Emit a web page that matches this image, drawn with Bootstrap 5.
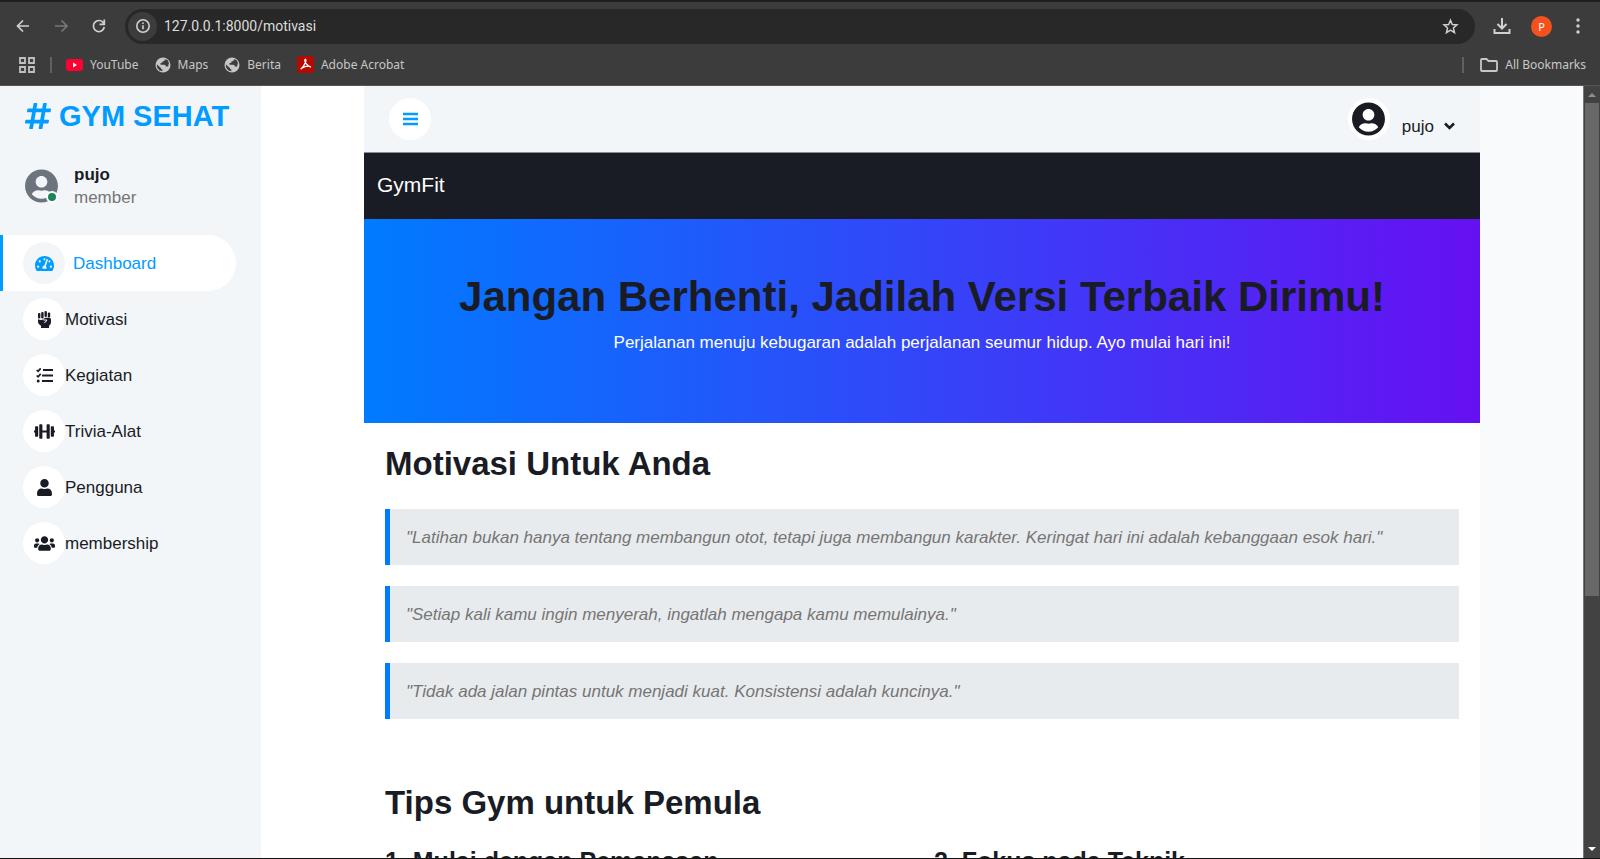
<!DOCTYPE html>
<html lang="id">
<head>
<meta charset="utf-8">
<meta name="viewport" content="width=device-width, initial-scale=1">
<title>GymFit - Motivasi</title>
<link href="https://cdn.jsdelivr.net/npm/bootstrap@5.3.0/dist/css/bootstrap.min.css" rel="stylesheet">
<style>
:root{--ink:#191c24;--sky:#009cff;--mist:#f3f6f9;--chrome:#3c3c3c}
body{font-family:"Liberation Sans",Arial,sans-serif;font-size:17px;line-height:25px;color:#757575;background:#fff}
a{text-decoration:none}
svg{display:block;flex:none}
h1,h2,h3{color:var(--ink);font-weight:700;line-height:1.2}
.browser-ui{background:var(--chrome);border-top:2px solid #1f1f1f;border-bottom:1px solid #555;height:86px;font-family:"Noto Sans",sans-serif;color:#c7c7c7}
.browser-ui button,.topbar button{background:none;border:0;padding:0;color:inherit}
.tool-row{height:48px;padding:0 16px 0 14px}
.nav-arrows{gap:15px}
.omnibox{background:#282828;height:35px;border-radius:18px;margin-left:15px;padding:0 16px 0 3px}
.omnibox input{background:none;border:0;outline:0;color:#dcdcdc;font-size:14px;font-family:Roboto,sans-serif;margin-left:5px}
.site-info{width:29px;height:29px;border-radius:50%;background:var(--chrome)!important}
.avatar-p{width:21px;height:21px;border-radius:50%;background:#f4511e!important;color:#fff!important;font-size:11px}
.tool-end{margin-left:14px}
.mark-row{height:30px;padding:0 14px 1px 19px;font-size:12px}
.mark-row a{color:#c7c7c7;gap:7px}
.divider{width:2px;height:16px;background:#606060}
.divider.first{margin:0 14px 0 15px}
.viewport{height:calc(100vh - 86px);border-bottom:1px solid #111}
.side{width:261px;background:var(--mist)}
.brand{font-size:29px;font-weight:700;color:var(--sky);gap:8px;height:60px;padding-left:25px}
.person{padding:17px 0 0 25px;gap:16px;line-height:23px}
.person strong{color:var(--ink)}
.online{right:0;bottom:0;width:12px;height:12px;border:2px solid #fff;background:#198754;border-radius:50%}
.menu{margin-top:26px}
.menu a{height:56px;width:236px;color:var(--ink);padding-left:20px;border-left:3px solid transparent;border-radius:0 28px 28px 0}
.menu a.active{background:#fff;color:var(--sky);border-color:var(--sky);gap:8px}
.disc{width:42px;height:42px;border-radius:50%;background:#fff}
.menu a.active .disc{background:var(--mist)}
.page-col{margin:0 103px}
.topbar{height:67px;background:var(--mist);padding:0 23px 0 25px;border-bottom:1px solid #8b8f95;color:var(--ink)}
.topbar .disc{background:#fff;color:var(--sky)}
.account{padding-top:14px}
.gymbar{background:var(--ink);height:66px;padding:0 13px 3px}
.gymbar a{color:#fff;font-size:21px}
.hero{background:linear-gradient(to right,#007bff,#6610f2);color:#fff;padding:53px 20px 68px}
.hero h1{font-size:42px}
.inner{padding:21px}
.inner h2{font-size:33px;line-height:40px;margin-bottom:25px}
.inner h3{font-size:25px}
.quote{background:#e8ebee;border-left:5px solid #007bff;padding:16px 16px 15px;margin-bottom:21px;font-style:italic}
.tips{padding-top:43px}
.tips h2{margin-bottom:23px}
.gutter-right{background:#f8fafc;width:103px;margin-left:-103px}
.scroller{width:17px;background:#424242;border-left:1px solid #777}
.thumb{height:493px;width:14px;background:#686868}
</style>
</head>
<body class="overflow-hidden">
<header class="browser-ui">
  <div class="tool-row d-flex align-items-center">
    <div class="nav-arrows d-flex">
      <button aria-label="Back"><svg width="22" height="22" viewBox="0 0 22 22" fill="none" stroke="#d0d0d0" stroke-width="1.700"><path d="M15 11H4M9 5.500L3.500 11 9 16.500"/></svg></button>
      <button aria-label="Forward"><svg width="22" height="22" viewBox="0 0 22 22" fill="none" stroke="#777" stroke-width="1.700"><path d="M4 11h12M10.500 5.500L16 11l-5.500 5.500"/></svg></button>
      <button aria-label="Reload"><svg width="22" height="22" viewBox="0 0 22 22" fill="none" stroke="#d0d0d0" stroke-width="1.700"><path d="M15.500 8a5.500 5.500 0 1 0 .8 4M16.300 4.500v4.800h-4.800"/></svg></button>
    </div>
    <div class="omnibox d-flex align-items-center flex-grow-1">
      <button class="site-info d-flex align-items-center justify-content-center" aria-label="Site information"><svg width="16" height="16" viewBox="0 0 16 16" fill="none" stroke="#d0d0d0" stroke-width="1.600"><circle cx="8" cy="8" r="6.200"/><path d="M8 7.200v4M8 4.500v1.600"/></svg></button>
      <input class="flex-grow-1" type="text" aria-label="Address" value="127.0.0.1:8000/motivasi">
      <button aria-label="Bookmark"><svg width="17" height="17" viewBox="0 0 17 17" fill="none" stroke="#d0d0d0" stroke-width="1.500"><path d="M8.500 2.200l1.800 4.300 4.700.4-3.600 3.100 1.100 4.600-4-2.500-4 2.500 1.100-4.600L2 6.900l4.700-.4z"/></svg></button>
    </div>
    <div class="tool-end d-flex align-items-center gap-3">
      <button class="ms-1" aria-label="Downloads"><svg width="18" height="18" viewBox="0 0 18 18" fill="none" stroke="#d0d0d0" stroke-width="2"><path d="M9 1v10M4.500 7L9 11.500 13.500 7M1.500 12v4h15v-4"/></svg></button>
      <button class="avatar-p ms-1 d-flex align-items-center justify-content-center" aria-label="Profile">P</button>
      <button class="ms-1" aria-label="Menu"><svg width="12" height="18" viewBox="0 0 12 18" fill="#d0d0d0"><circle cx="6" cy="3" r="1.700"/><circle cx="6" cy="9" r="1.700"/><circle cx="6" cy="15" r="1.700"/></svg></button>
    </div>
  </div>
  <nav class="mark-row d-flex align-items-center">
    <button aria-label="Tab groups"><svg width="16" height="16" viewBox="0 0 16 16" fill="none" stroke="#c0c0c0" stroke-width="1.800"><path d="M1 1h5v5H1zM10 1h5v5h-5zM1 10h5v5H1zM10 10h5v5h-5z"/></svg></button>
    <span class="divider first"></span>
    <a href="#" class="d-flex align-items-center me-3"><svg width="17" height="12" viewBox="0 0 17 12"><rect width="17" height="12" rx="3" fill="#f03"/><path d="M7 3.500v5l4-2.500z" fill="#fff"/></svg>YouTube</a>
    <a href="#" class="d-flex align-items-center me-3"><svg width="16" height="16" viewBox="0 0 16 16"><circle cx="8" cy="8" r="7.500" fill="#c4c7c9"/><path d="M9.800 2.200c.2 1.700-.8 2-2.100 2.100-.2 1.500-1 1.700-2.200 1.800v1.600h3.700c1.300 0 1.500.8 1.500 1.800h2.500l.3-2 .5-1.500-1.500-3zM1.700 7.300l4.200 3.700c0 1 .6 1.200 1.400 1.300v1.900l-2.800-.8-2.300-2.700z" fill="#3c3c3c"/></svg>Maps</a>
    <a href="#" class="d-flex align-items-center me-3"><svg width="16" height="16" viewBox="0 0 16 16"><circle cx="8" cy="8" r="7.500" fill="#c4c7c9"/><path d="M9.800 2.200c.2 1.700-.8 2-2.100 2.100-.2 1.500-1 1.700-2.200 1.800v1.600h3.700c1.300 0 1.500.8 1.500 1.800h2.500l.3-2 .5-1.500-1.500-3zM1.700 7.300l4.200 3.700c0 1 .6 1.200 1.400 1.300v1.900l-2.800-.8-2.300-2.700z" fill="#3c3c3c"/></svg>Berita</a>
    <a href="#" class="d-flex align-items-center"><svg width="17" height="17" viewBox="0 0 16 16"><rect width="16" height="16" rx="3" fill="#b30b00"/><path d="M7.500 3c2 0 .5 5-4 9.500M7.500 3c-1 2 1.500 6 5.500 7.500-2-1.500-6-.5-8.500 1" fill="none" stroke="#fff" stroke-width="1.200"/></svg>Adobe Acrobat</a>
    <span class="divider ms-auto me-3"></span>
    <a href="#" class="d-flex align-items-center"><svg width="18" height="14" viewBox="0 0 18 14" fill="none" stroke="#c7c7c7" stroke-width="1.800"><path d="M1 2q0-1 1-1h4.500l2 2H16q1 0 1 1v8q0 1-1 1H2q-1 0-1-1z"/></svg>All Bookmarks</a>
  </nav>
</header>

<div class="viewport d-flex overflow-hidden">
  <aside class="side flex-shrink-0">
    <a href="#" class="brand d-flex align-items-center"><svg width="26" height="30" viewBox="0 0 448 512" fill="currentColor"><path d="M440.667 182.109l7.143-40c1.313-7.355-4.342-14.109-11.813-14.109h-74.810l14.623-81.891C377.123 38.754 371.468 32 363.997 32h-40.632a12 12 0 0 0-11.813 9.891L296.175 128H197.540l14.623-81.891C213.477 38.754 207.822 32 200.350 32h-40.632a12 12 0 0 0-11.813 9.891L132.528 128H53.432a12 12 0 0 0-11.813 9.891l-7.143 40C33.163 185.246 38.818 192 46.289 192h74.810L98.242 320H19.146a12 12 0 0 0-11.813 9.891l-7.143 40C-1.123 377.246 4.532 384 12.003 384h74.810L72.190 465.891C70.877 473.246 76.532 480 84.003 480h40.632a12 12 0 0 0 11.813-9.891L151.826 384h98.634l-14.623 81.891C234.523 473.246 240.178 480 247.650 480h40.632a12 12 0 0 0 11.813-9.891L315.472 384h79.096a12 12 0 0 0 11.813-9.891l7.143-40c1.313-7.355-4.342-14.109-11.813-14.109h-74.810l22.857-128h79.096a12 12 0 0 0 11.813-9.891zM261.889 320h-98.634l22.857-128h98.634l-22.857 128z"/></svg>GYM SEHAT</a>
    <div class="person d-flex align-items-center">
      <div class="position-relative">
        <svg width="33" height="34" viewBox="0 0 496 512" fill="#6c757d"><path d="M248 8C111 8 0 119 0 256s111 248 248 248 248-111 248-248S385 8 248 8zm0 96c48.600 0 88 39.400 88 88s-39.400 88-88 88-88-39.400-88-88 39.400-88 88-88zm0 344c-58.700 0-111.300-26.600-146.500-68.200 18.800-35.400 55.600-59.800 98.500-59.800 2.400 0 4.800.4 7.100 1.100 13 4.200 26.600 6.900 40.900 6.900 14.300 0 28-2.700 40.900-6.900 2.300-.7 4.700-1.100 7.100-1.100 42.900 0 79.700 24.400 98.500 59.800C359.300 421.400 306.700 448 248 448z"/></svg>
        <span class="online position-absolute"></span>
      </div>
      <div><strong class="d-block">pujo</strong><span>member</span></div>
    </div>
    <nav class="menu">
      <a href="#" class="active d-flex align-items-center"><span class="disc d-flex align-items-center justify-content-center"><svg width="19" height="17" viewBox="0 0 576 512" fill="currentColor"><path d="M288 32C128.940 32 0 160.940 0 320c0 52.800 14.250 102.260 39.060 144.800 5.610 9.620 16.300 15.200 27.440 15.200h443c11.140 0 21.830-5.580 27.440-15.200C561.750 422.260 576 372.800 576 320c0-159.060-128.940-288-288-288zm0 64c14.710 0 26.580 10.130 30.320 23.650-1.110 2.260-2.640 4.230-3.450 6.670l-9.220 27.670c-5.130 3.490-10.970 6.010-17.640 6.010-17.670 0-32-14.330-32-32S270.330 96 288 96zM96 384c-17.670 0-32-14.330-32-32s14.330-32 32-32 32 14.330 32 32-14.330 32-32 32zm48-160c-17.670 0-32-14.330-32-32s14.330-32 32-32 32 14.330 32 32-14.330 32-32 32zm246.770-72.410l-61.330 184C343.130 347.330 352 364.540 352 384c0 11.720-3.380 22.550-8.880 32H232.880c-5.500-9.450-8.880-20.280-8.880-32 0-33.940 26.500-61.430 59.900-63.590l61.340-184.010c4.170-12.560 17.730-19.450 30.360-15.170 12.570 4.190 19.350 17.790 15.170 30.360zm14.660 57.200l15.520-46.550c3.470-1.290 7.130-2.230 11.050-2.230 17.670 0 32 14.330 32 32s-14.330 32-32 32c-11.380-.01-20.890-6.280-26.570-15.220zM480 384c-17.670 0-32-14.330-32-32s14.330-32 32-32 32 14.330 32 32-14.330 32-32 32z"/></svg></span>Dashboard</a>
      <a href="#" class="d-flex align-items-center"><span class="disc d-flex align-items-center justify-content-center"><svg width="15" height="17" viewBox="0 0 15 17" fill="currentColor"><rect x="1" y="2" width="2.400" height="5.500" rx="1"/><rect x="4.200" y="1" width="2.400" height="6.500" rx="1"/><rect x="7.500" y="0" width="2.400" height="6" rx="1"/><rect x="10.800" y="1.500" width="2.400" height="5" rx="1"/><path d="M1 8.300q3 1.500 6 0v-.8q1-1 2-.8h3q2 .2 2 1.500v3q0 2-2 3.500V17H4v-2.300Q1 13.500 1 11z"/><path d="M6.500 9h3.300q-.5 2-2.500 2.700" fill="none" stroke="#fff"/></svg></span>Motivasi</a>
      <a href="#" class="d-flex align-items-center"><span class="disc d-flex align-items-center justify-content-center"><svg width="17" height="17" viewBox="0 0 17 17" fill="none" stroke="currentColor" stroke-width="2.200"><path d="M7 3h10M6 8.500h11M6 14h11"/><path d="M.7 3l1.400 1.300L4.700 1.400M.7 8.500l1.400 1.300 2.600-2.900" stroke-width="1.700"/><circle cx="2.200" cy="14" r="1.500" fill="currentColor" stroke="none"/></svg></span>Kegiatan</a>
      <a href="#" class="d-flex align-items-center"><span class="disc d-flex align-items-center justify-content-center"><svg width="21" height="17" viewBox="0 0 640 512" fill="currentColor"><path d="M104 96H56c-13.300 0-24 10.700-24 24v104H8c-4.400 0-8 3.600-8 8v48c0 4.400 3.600 8 8 8h24v104c0 13.300 10.700 24 24 24h48c13.300 0 24-10.700 24-24V120c0-13.300-10.700-24-24-24zm528 128h-24V120c0-13.300-10.700-24-24-24h-48c-13.300 0-24 10.700-24 24v272c0 13.300 10.700 24 24 24h48c13.300 0 24-10.700 24-24V288h24c4.400 0 8-3.600 8-8v-48c0-4.400-3.600-8-8-8zM456 32h-48c-13.300 0-24 10.700-24 24v168H256V56c0-13.300-10.700-24-24-24h-48c-13.300 0-24 10.700-24 24v400c0 13.300 10.700 24 24 24h48c13.300 0 24-10.700 24-24V288h128v168c0 13.300 10.700 24 24 24h48c13.300 0 24-10.700 24-24V56c0-13.300-10.700-24-24-24z"/></svg></span>Trivia-Alat</a>
      <a href="#" class="d-flex align-items-center"><span class="disc d-flex align-items-center justify-content-center"><svg width="15" height="17" viewBox="0 0 448 512" fill="currentColor"><path d="M224 256c70.700 0 128-57.300 128-128S294.700 0 224 0 96 57.300 96 128s57.300 128 128 128zm89.600 32h-16.700c-22.200 10.200-46.900 16-72.900 16s-50.600-5.800-72.900-16h-16.700C60.200 288 0 348.200 0 422.400V464c0 26.500 21.500 48 48 48h352c26.500 0 48-21.500 48-48v-41.600c0-74.200-60.200-134.400-134.400-134.400z"/></svg></span>Pengguna</a>
      <a href="#" class="d-flex align-items-center"><span class="disc d-flex align-items-center justify-content-center"><svg width="21" height="17" viewBox="0 0 640 512" fill="currentColor"><path d="M96 224c35.300 0 64-28.700 64-64s-28.700-64-64-64-64 28.700-64 64 28.700 64 64 64zm448 0c35.300 0 64-28.700 64-64s-28.700-64-64-64-64 28.700-64 64 28.700 64 64 64zm32 32h-64c-17.600 0-33.500 7.100-45.100 18.600 40.300 22.100 68.900 62 75.100 109.400h66c17.700 0 32-14.300 32-32v-32c0-35.300-28.700-64-64-64zm-256 0c61.900 0 112-50.100 112-112S381.900 32 320 32 208 82.100 208 144s50.100 112 112 112zm76.800 32h-8.300c-20.800 10-43.900 16-68.500 16s-47.600-6-68.500-16h-8.300C179.600 288 128 339.600 128 403.200V432c0 26.500 21.500 48 48 48h288c26.500 0 48-21.500 48-48v-28.800c0-63.600-51.600-115.200-115.200-115.200zm-223.700-13.400C161.500 263.100 145.600 256 128 256H64c-35.300 0-64 28.700-64 64v32c0 17.700 14.300 32 32 32h65.900c6.300-47.400 34.900-87.300 75.200-109.400z"/></svg></span>membership</a>
    </nav>
  </aside>

  <main class="page-col flex-grow-1">
    <div class="topbar d-flex align-items-center justify-content-between">
      <button class="disc d-flex align-items-center justify-content-center" aria-label="Toggle sidebar"><svg width="15" height="14" viewBox="0 0 15 14" stroke="currentColor" stroke-width="2.400"><path d="M0 2h15M0 7h15M0 12h15"/></svg></button>
      <button class="d-flex align-items-center" aria-label="Account pujo">
        <span class="disc d-flex align-items-center justify-content-center"><svg width="33" height="34" viewBox="0 0 496 512" fill="#191c24"><path d="M248 8C111 8 0 119 0 256s111 248 248 248 248-111 248-248S385 8 248 8zm0 96c48.600 0 88 39.400 88 88s-39.400 88-88 88-88-39.400-88-88 39.400-88 88-88zm0 344c-58.700 0-111.300-26.600-146.500-68.200 18.800-35.400 55.600-59.800 98.500-59.800 2.400 0 4.800.4 7.100 1.100 13 4.200 26.600 6.900 40.900 6.900 14.300 0 28-2.700 40.900-6.900 2.300-.7 4.700-1.100 7.100-1.100 42.900 0 79.700 24.400 98.500 59.800C359.300 421.400 306.700 448 248 448z"/></svg></span>
        <span class="account d-flex align-items-center ms-2 ps-1 gap-2">pujo<svg width="15" height="10" viewBox="0 0 15 10" fill="none" stroke="currentColor" stroke-width="2.600"><path d="M3 2.500l4.500 4.500L12 2.500"/></svg></span>
      </button>
    </div>
    <nav class="gymbar d-flex align-items-center"><a href="#">GymFit</a></nav>
    <section class="hero text-center">
      <h1>Jangan Berhenti, Jadilah Versi Terbaik Dirimu!</h1>
      <p class="mb-0">Perjalanan menuju kebugaran adalah perjalanan seumur hidup. Ayo mulai hari ini!</p>
    </section>
    <section class="inner">
      <h2>Motivasi Untuk Anda</h2>
      <div class="quote">"Latihan bukan hanya tentang membangun otot, tetapi juga membangun karakter. Keringat hari ini adalah kebanggaan esok hari."</div>
      <div class="quote">"Setiap kali kamu ingin menyerah, ingatlah mengapa kamu memulainya."</div>
      <div class="quote">"Tidak ada jalan pintas untuk menjadi kuat. Konsistensi adalah kuncinya."</div>
      <div class="tips">
        <h2>Tips Gym untuk Pemula</h2>
        <div class="row">
          <div class="col-6"><h3>1. Mulai dengan Pemanasan</h3></div>
          <div class="col-6"><h3>2. Fokus pada Teknik</h3></div>
        </div>
      </div>
    </section>
  </main>
  <div class="gutter-right flex-shrink-0"></div>
  <div class="scroller flex-shrink-0 d-flex flex-column align-items-center justify-content-between">
    <div>
      <svg width="14" height="17" viewBox="0 0 14 17" fill="#8f8f8f"><path d="M3 11h8L7 7z"/></svg>
      <div class="thumb"></div>
    </div>
    <svg width="14" height="17" viewBox="0 0 14 17" fill="#fff"><path d="M3 6h8l-4 4z"/></svg>
  </div>
</div>
<script src="https://cdn.jsdelivr.net/npm/bootstrap@5.3.0/dist/js/bootstrap.bundle.min.js"></script>
</body>
</html>
